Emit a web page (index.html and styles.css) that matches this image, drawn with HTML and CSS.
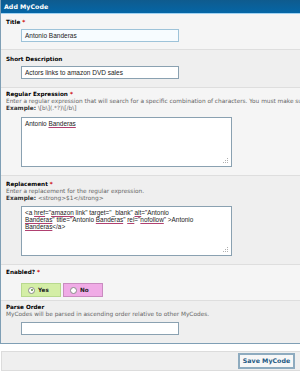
FILE: index.html
```html
<!DOCTYPE html>
<html>
<head>
<meta charset="utf-8">
<link rel="stylesheet" href="styles.css">
</head>
<body>
<div class="panel">
  <div class="panel-head">Add MyCode</div>

  <div class="row row-a row-title">
    <div class="label">Title <span class="req">*</span></div>
    <div class="field field-t3"><div class="input input-focus">Antonio Banderas</div></div>
  </div>

  <div class="row row-b row-short">
    <div class="label">Short Description</div>
    <div class="field field-t3"><div class="input">Actors links to amazon DVD sales</div></div>
  </div>

  <div class="row row-a row-regex">
    <div class="label">Regular Expression <span class="req">*</span></div>
    <div class="desc">Enter a regular expression that will search for a specific combination of characters. You must make sure</div>
    <div class="desc"><b class="ex">Example:</b> \[b\](.*?)\[/b\]</div>
    <div class="field field-t5">
      <div class="textarea">
        <div class="line">Antonio <span class="sp">Banderas</span></div>
        <svg class="grip" width="6" height="6" viewBox="0 0 6 6"><rect x="4" y="0" width="1" height="1"/><rect x="2" y="2" width="1" height="1"/><rect x="4" y="2" width="1" height="1"/><rect x="0" y="4" width="1" height="1"/><rect x="2" y="4" width="1" height="1"/><rect x="4" y="4" width="1" height="1"/></svg>
      </div>
    </div>
  </div>

  <div class="row row-b row-repl">
    <div class="label">Replacement <span class="req">*</span></div>
    <div class="desc">Enter a replacement for the regular expression.</div>
    <div class="desc"><b class="ex">Example:</b> &lt;strong&gt;$1&lt;/strong&gt;</div>
    <div class="field field-t4">
      <div class="textarea">
        <div class="line">&lt;a <span class="sp">href</span>="<span class="sp">amazon</span> link" target="_blank" <span class="sp">alt</span>="Antonio</div>
        <div class="line"><span class="sp">Banderas</span>" title="Antonio <span class="sp">Banderas</span>" <span class="sp">rel</span>="<span class="sp">nofollow</span>" &gt;Antonio</div>
        <div class="line"><span class="sp">Banderas</span>&lt;/a&gt;</div>
        <svg class="grip" width="6" height="6" viewBox="0 0 6 6"><rect x="4" y="0" width="1" height="1"/><rect x="2" y="2" width="1" height="1"/><rect x="4" y="2" width="1" height="1"/><rect x="0" y="4" width="1" height="1"/><rect x="2" y="4" width="1" height="1"/><rect x="4" y="4" width="1" height="1"/></svg>
      </div>
    </div>
  </div>

  <div class="row row-a row-enabled">
    <div class="label">Enabled? <span class="req">*</span></div>
    <div class="field field-t7">
      <div class="radios">
        <div class="radio radio-yes"><span class="dot dot-on"></span>Yes</div>
        <div class="radio radio-no"><span class="dot"></span>No</div>
      </div>
    </div>
  </div>

  <div class="row row-b row-parse">
    <div class="label">Parse Order</div>
    <div class="desc">MyCodes will be parsed in ascending order relative to other MyCodes.</div>
    <div class="field field-t4"><div class="input"></div></div>
  </div>
</div>

<div class="buttons">
  <div class="btn">Save MyCode</div>
</div>
</body>
</html>
```

FILE: styles.css
```css
html, body {
  margin: 0;
  padding: 0;
  background: #ffffff;
  overflow: hidden;
  width: 300px;
  height: 377px;
}

body {
  font-family: "DejaVu Sans", Verdana, sans-serif;
  color: #000;
}

.panel {
  width: 306px;
  border-left: 1px solid #7f9fb5;
  border-bottom: 1px solid #7f9fb5;
  background: #f5f5f5;
}

.panel-head {
  height: 13px;
  line-height: 13px;
  background: linear-gradient(#0f5b8e, #0566a6);
  border-bottom: 1px solid #9fd2f2;
  color: #fff;
  font-weight: bold;
  font-size: 6.3px;
  padding-left: 3px;
}

.row {
  padding: 5px 5px 8px;
  border-bottom: 1px solid #dedede;
}
.row-a { background: #f5f5f5; }
.row-b { background: #efefef; }
.row-title { padding-top: 5px; padding-bottom: 7px; }
.row-short { padding-top: 6px; }
.row-regex { padding-top: 3px; }
.row-enabled { padding-top: 4px; padding-bottom: 3px; }
.row-parse { padding-top: 3px; border-bottom: none; }

.label {
  font-weight: bold;
  font-size: 5.7px;
  line-height: 7px;
  height: 7px;
  color: #000;
  white-space: nowrap;
}
.req { color: #cc0000; }

.desc {
  font-size: 5.8px;
  line-height: 7px;
  height: 7px;
  color: #666;
  white-space: nowrap;
}
.ex { color: #333; }

.field { padding-left: 15px; }
.field-t3 { padding-top: 3px; }
.field-t4 { padding-top: 4px; }
.field-t5 { padding-top: 5px; }
.field-t7 { padding-top: 7px; }

.input {
  width: 153px;
  height: 11px;
  border: 1px solid #8aa1b1;
  background: #fff;
  font-family: "Liberation Sans", Arial, sans-serif;
  font-size: 6.5px;
  line-height: 11px;
  padding-left: 3px;
  color: #222;
  white-space: nowrap;
}
.input-focus {
  border-color: #9ec3d9;
  background: #f7fcff;
}

.textarea {
  position: relative;
  width: 206px;
  height: 46px;
  border: 1px solid #8aa1b1;
  background: #fff;
  font-family: "Liberation Sans", Arial, sans-serif;
  font-size: 6.4px;
  line-height: 7px;
  padding: 2px 0 0 3px;
  color: #222;
}
.line { white-space: nowrap; }
.sp {
  text-decoration: underline;
  text-decoration-color: #b04070;
}
.grip {
  position: absolute;
  right: 2px;
  bottom: 2px;
  fill: #b0b0b0;
}

.radios {
  display: flex;
  gap: 2px;
}
.radio {
  display: flex;
  align-items: center;
  gap: 3px;
  width: 32px;
  height: 12px;
  padding-left: 6px;
  font-weight: bold;
  font-size: 5.7px;
  color: #222;
}
.radio-yes {
  background: #d4eea6;
  border: 1px solid #b8d98e;
}
.radio-no {
  background: #f0abe6;
  border: 1px solid #c98cc0;
}
.dot {
  width: 5px;
  height: 5px;
  border: 1px solid #8a8a8a;
  border-radius: 50%;
  background: #fff;
  display: flex;
  align-items: center;
  justify-content: center;
  flex: none;
}
.dot-on::after {
  content: "";
  width: 2px;
  height: 2px;
  border-radius: 50%;
  background: #5a8a3a;
}

.buttons {
  margin-top: 7px;
  margin-left: 1px;
  width: 298px;
  height: 18px;
  border: 1px solid #dcdcdc;
  border-right: none;
  background: #efefef;
  display: flex;
  justify-content: flex-end;
  align-items: center;
}
.btn {
  margin-right: 5px;
  width: 53px;
  height: 12px;
  border: 2px solid #8eabbf;
  background: #f7f7f7;
  color: #1f5a84;
  font-weight: bold;
  font-size: 6.3px;
  line-height: 12px;
  text-align: center;
}
```
